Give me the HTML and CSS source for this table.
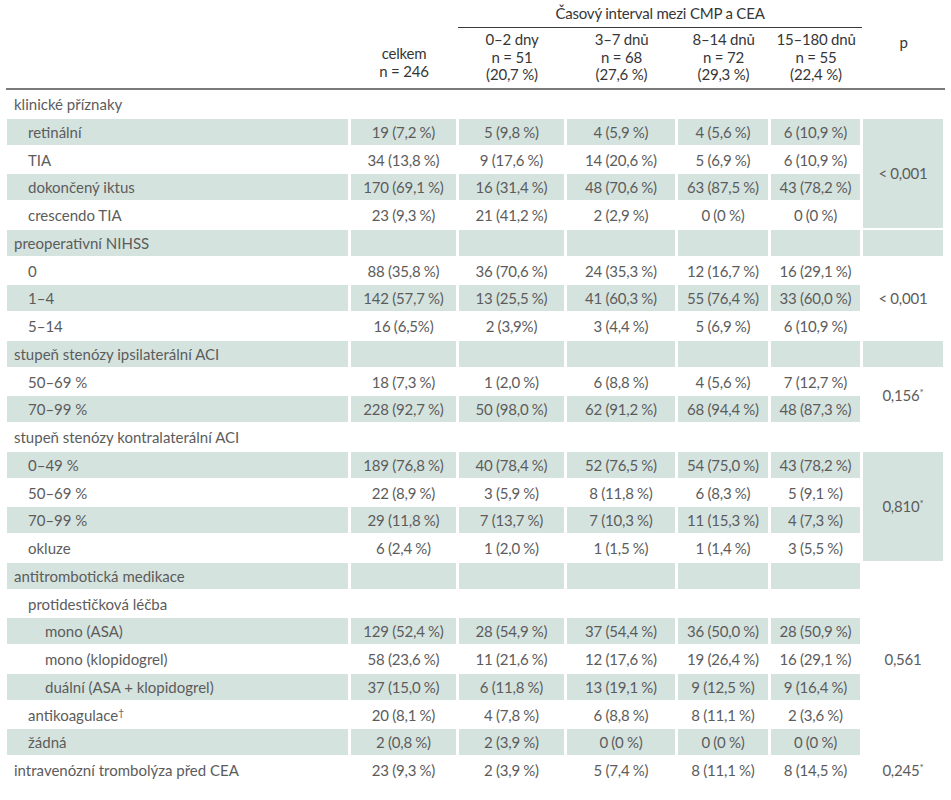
FILE: index.html
```html
<!DOCTYPE html>
<html>
<head>
    <title>Časový interval mezi CMP a CEA</title>
    <link rel="stylesheet" href="styles.css">
</head>
<body>
    <table class="results">
        <colgroup>
            <col class="c-label">
            <col class="c-total">
            <col class="c-g1">
            <col class="c-g2">
            <col class="c-g3">
            <col class="c-g4">
            <col class="c-p">
        </colgroup>
        <thead>
            <tr class="head-top">
                <th rowspan="2" class="head-base"></th>
                <th></th>
                <th colspan="4" class="span-title">Časový interval mezi CMP a CEA</th>
                <th rowspan="2" class="head-base head-p">p</th>
            </tr>
            <tr class="head-sub">
                <th class="head-base head-total">celkem<br>n = 246</th>
                <th class="head-base">0–2 dny<br>n = 51<br>(20,7 %)</th>
                <th class="head-base">3–7 dnů<br>n = 68<br>(27,6 %)</th>
                <th class="head-base">8–14 dnů<br>n = 72<br>(29,3 %)</th>
                <th class="head-base">15–180 dnů<br>n = 55<br>(22,4 %)</th>
            </tr>
        </thead>
        <tbody>
            <!-- klinické příznaky -->
            <tr>
                <td class="group">klinické příznaky</td>
                <td></td><td></td><td></td><td></td><td></td><td></td>
            </tr>
            <tr class="shade">
                <td class="lvl1">retinální</td>
                <td>19 (7,2 %)</td><td>5 (9,8 %)</td><td>4 (5,9 %)</td><td>4 (5,6 %)</td><td>6 (10,9 %)</td>
                <td rowspan="4">&lt; 0,001</td>
            </tr>
            <tr>
                <td class="lvl1">TIA</td>
                <td>34 (13,8 %)</td><td>9 (17,6 %)</td><td>14 (20,6 %)</td><td>5 (6,9 %)</td><td>6 (10,9 %)</td>
            </tr>
            <tr class="shade">
                <td class="lvl1">dokončený iktus</td>
                <td>170 (69,1 %)</td><td>16 (31,4 %)</td><td>48 (70,6 %)</td><td>63 (87,5 %)</td><td>43 (78,2 %)</td>
            </tr>
            <tr>
                <td class="lvl1">crescendo TIA</td>
                <td>23 (9,3 %)</td><td>21 (41,2 %)</td><td>2 (2,9 %)</td><td>0 (0 %)</td><td>0 (0 %)</td>
            </tr>

            <!-- preoperativní NIHSS -->
            <tr class="shade">
                <td class="group">preoperativní NIHSS</td>
                <td></td><td></td><td></td><td></td><td></td><td></td>
            </tr>
            <tr>
                <td class="lvl1">0</td>
                <td>88 (35,8 %)</td><td>36 (70,6 %)</td><td>24 (35,3 %)</td><td>12 (16,7 %)</td><td>16 (29,1 %)</td>
                <td rowspan="3">&lt; 0,001</td>
            </tr>
            <tr class="shade">
                <td class="lvl1">1–4</td>
                <td>142 (57,7 %)</td><td>13 (25,5 %)</td><td>41 (60,3 %)</td><td>55 (76,4 %)</td><td>33 (60,0 %)</td>
            </tr>
            <tr>
                <td class="lvl1">5–14</td>
                <td>16 (6,5%)</td><td>2 (3,9%)</td><td>3 (4,4 %)</td><td>5 (6,9 %)</td><td>6 (10,9 %)</td>
            </tr>

            <!-- stupeň stenózy ipsilaterální ACI -->
            <tr class="shade">
                <td class="group">stupeň stenózy ipsilaterální ACI</td>
                <td></td><td></td><td></td><td></td><td></td><td></td>
            </tr>
            <tr>
                <td class="lvl1">50–69 %</td>
                <td>18 (7,3 %)</td><td>1 (2,0 %)</td><td>6 (8,8 %)</td><td>4 (5,6 %)</td><td>7 (12,7 %)</td>
                <td rowspan="2">0,156<sup>*</sup></td>
            </tr>
            <tr class="shade">
                <td class="lvl1">70–99 %</td>
                <td>228 (92,7 %)</td><td>50 (98,0 %)</td><td>62 (91,2 %)</td><td>68 (94,4 %)</td><td>48 (87,3 %)</td>
            </tr>

            <!-- stupeň stenózy kontralaterální ACI -->
            <tr>
                <td class="group">stupeň stenózy kontralaterální ACI</td>
                <td></td><td></td><td></td><td></td><td></td><td></td>
            </tr>
            <tr class="shade">
                <td class="lvl1">0–49 %</td>
                <td>189 (76,8 %)</td><td>40 (78,4 %)</td><td>52 (76,5 %)</td><td>54 (75,0 %)</td><td>43 (78,2 %)</td>
                <td rowspan="4">0,810<sup>*</sup></td>
            </tr>
            <tr>
                <td class="lvl1">50–69 %</td>
                <td>22 (8,9 %)</td><td>3 (5,9 %)</td><td>8 (11,8 %)</td><td>6 (8,3 %)</td><td>5 (9,1 %)</td>
            </tr>
            <tr class="shade">
                <td class="lvl1">70–99 %</td>
                <td>29 (11,8 %)</td><td>7 (13,7 %)</td><td>7 (10,3 %)</td><td>11 (15,3 %)</td><td>4 (7,3 %)</td>
            </tr>
            <tr>
                <td class="lvl1">okluze</td>
                <td>6 (2,4 %)</td><td>1 (2,0 %)</td><td>1 (1,5 %)</td><td>1 (1,4 %)</td><td>3 (5,5 %)</td>
            </tr>

            <!-- antitrombotická medikace -->
            <tr class="shade">
                <td class="group">antitrombotická medikace</td>
                <td></td><td></td><td></td><td></td><td></td>
                <td rowspan="7" class="plain">0,561</td>
            </tr>
            <tr>
                <td class="lvl1">protidestičková léčba</td>
                <td></td><td></td><td></td><td></td><td></td>
            </tr>
            <tr class="shade">
                <td class="lvl2">mono (ASA)</td>
                <td>129 (52,4 %)</td><td>28 (54,9 %)</td><td>37 (54,4 %)</td><td>36 (50,0 %)</td><td>28 (50,9 %)</td>
            </tr>
            <tr>
                <td class="lvl2">mono (klopidogrel)</td>
                <td>58 (23,6 %)</td><td>11 (21,6 %)</td><td>12 (17,6 %)</td><td>19 (26,4 %)</td><td>16 (29,1 %)</td>
            </tr>
            <tr class="shade">
                <td class="lvl2">duální (ASA + klopidogrel)</td>
                <td>37 (15,0 %)</td><td>6 (11,8 %)</td><td>13 (19,1 %)</td><td>9 (12,5 %)</td><td>9 (16,4 %)</td>
            </tr>
            <tr>
                <td class="lvl1">antikoagulace<sup>†</sup></td>
                <td>20 (8,1 %)</td><td>4 (7,8 %)</td><td>6 (8,8 %)</td><td>8 (11,1 %)</td><td>2 (3,6 %)</td>
            </tr>
            <tr class="shade">
                <td class="lvl1">žádná</td>
                <td>2 (0,8 %)</td><td>2 (3,9 %)</td><td>0 (0 %)</td><td>0 (0 %)</td><td>0 (0 %)</td>
            </tr>

            <tr>
                <td class="group">intravenózní trombolýza před CEA</td>
                <td>23 (9,3 %)</td><td>2 (3,9 %)</td><td>5 (7,4 %)</td><td>8 (11,1 %)</td><td>8 (14,5 %)</td>
                <td>0,245<sup>*</sup></td>
            </tr>
        </tbody>
    </table>
</body>
</html>
```

FILE: styles.css
```css
:root {
    --shade: #d5e3df;
    --text: #5c5c5c;
    --head-text: #363636;
    --rule: #7a7a7a;
}

body {
    margin: 0;
    background: white;
    color: var(--text);
    font-family: Lato, 'Liberation Sans', sans-serif;
    font-size: 15px;
}

.results {
    margin-left: 6px;
    width: 939px;
    table-layout: fixed;
    border-collapse: separate;
    border-spacing: 0;
}

.c-label { width: 344px; }
.c-total { width: 108px; }
.c-g1 { width: 108px; }
.c-g2 { width: 111px; }
.c-g3 { width: 93px; }
.c-g4 { width: 92px; }
.c-p { width: 83px; }

/* Header */
th {
    padding: 0;
    font-weight: normal;
    color: var(--head-text);
    text-align: center;
    line-height: 17.5px;
    letter-spacing: -0.2px;
}

.head-top th {
    height: 28px;
    vertical-align: top;
    padding-top: 5px;
    box-sizing: border-box;
}

.span-title {
    border-bottom: 1px solid #3a3a3a;
}

.head-sub th {
    vertical-align: top;
    padding: 3px 0 4.5px;
}

.head-base {
    border-bottom: 2px solid var(--rule);
}

.head-top .head-p {
    vertical-align: middle;
    padding: 0 0 2px;
}

.head-sub .head-total {
    padding: 17px 0 8px;
}

/* Body */
td {
    padding: 1px 7px 0;
    line-height: 24.75px;
    text-align: center;
    white-space: nowrap;
    letter-spacing: -0.2px;
    word-spacing: -0.3px;
    border: solid white;
    border-width: 1px 2px 1px 1px;
}

tr.shade td {
    background: var(--shade);
}

tr td[rowspan="4"] {
    background: var(--shade);
}

tr.shade td.plain {
    background: white;
}

td.group,
td.lvl1,
td.lvl2 {
    text-align: left;
    letter-spacing: 0;
    word-spacing: 0;
}

td.group {
    padding-left: 7px;
}

td.lvl1 {
    padding-left: 21px;
}

td.lvl2 {
    padding-left: 38px;
}

sup {
    font-size: 10px;
    line-height: 0;
    vertical-align: 5px;
}
```
